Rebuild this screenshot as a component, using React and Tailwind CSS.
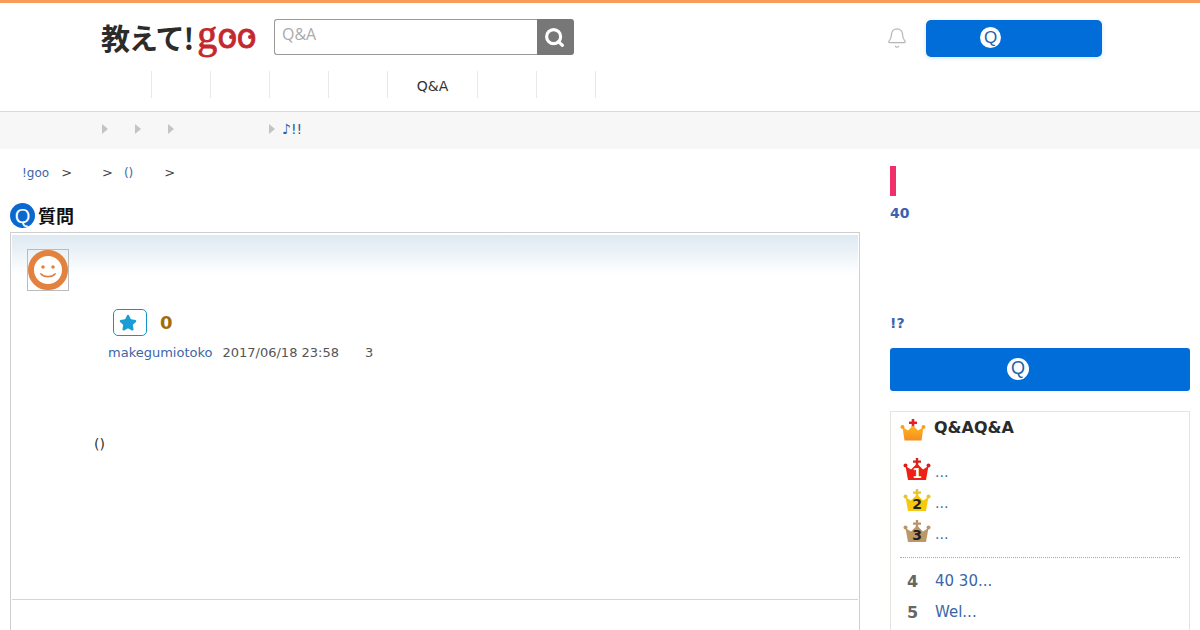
import { Search, Bell, Star } from "lucide-react";

const navWidths = ["w-[59px]", "w-[59px]", "w-[59px]", "w-[59px]", "w-[59px]", "w-[90px]", "w-[59px]", "w-[59px]"];

const Crown = ({ fill, dark, label, labelColor }) => (
  <svg viewBox="0 0 28 24" className="w-[28px] h-[24px] shrink-0">
    <path d="M12.8 1h2.4v2.6H18v2.2h-2.8V9h-2.4V5.8H10V3.6h2.8z" fill={dark} />
    <path d="M2.5 9l5.5 3.5 6-6 6 6L25.5 9 23 23H5z" fill={fill} />
    <circle cx="2.5" cy="8.5" r="2" fill={dark} />
    <circle cx="25.5" cy="8.5" r="2" fill={dark} />
    <text x="14" y="21" textAnchor="middle" fontSize="14" fontWeight="700" fontFamily="DejaVu Sans, sans-serif" fill={labelColor}>
      {label}
    </text>
  </svg>
);

const Triangle = () => <span className="block w-0 h-0 border-y-[5px] border-y-transparent border-l-[6px] border-l-[#c4c4c4]" />;

const Header = () => (
  <header className="border-t-[3px] border-[#f79c5a]">
    <div className="h-[109px] border-b border-[#d9d9d9]">
      {/* Logo + search */}
      <div className="flex items-start pl-[101px] pt-[16px] h-[68px]">
        <div className="relative flex items-center w-[173px] h-[36px] leading-none">
          <span className="font-['Noto_Sans_CJK_JP'] font-bold text-[29px] text-[#2b2b2b] tracking-[-1px]">教えて!</span>
          <span className="ml-[4px] mb-[5px] flex items-baseline text-[#c4282c]">
            <span className="font-['Liberation_Serif'] text-[40px] [-webkit-text-stroke:0.8px_#c4282c]">g</span>
            <span className="font-['DejaVu_Sans'] text-[33px] tracking-[-1px] [-webkit-text-stroke:0.8px_#c4282c]">oo</span>
          </span>
          <span className="absolute left-[128px] top-[16px] w-[4px] h-[4px] rounded-full bg-[#c4282c]" />
          <span className="absolute left-[147px] top-[16px] w-[4px] h-[4px] rounded-full bg-[#c4282c]" />
        </div>
        <div className="flex w-[300px] h-[36px]">
          <div className="flex-1 border border-[#999] border-r-0 rounded-l-[3px] pl-[7px] pt-[4px] text-[16px] leading-[20px] text-[#aaa] font-['Open_Sans']">Q&amp;A</div>
          <div className="w-[37px] bg-[#777] rounded-r-[3px] flex items-center justify-center pr-[2px]">
            <Search className="w-[21px] h-[21px] text-white" strokeWidth={3.6} />
          </div>
        </div>
        <div className="ml-auto mr-[98px] flex items-start">
          <Bell className="w-[22px] h-[22px] text-[#b5b5b5] mt-[8px] mr-[18px]" strokeWidth={1.3} />
          <div className="w-[176px] h-[37px] mt-[1px] bg-[#006dd9] rounded-[5px] shadow-[0_1px_4px_rgba(0,109,217,0.2)] flex items-center pl-[54px] pb-[2px]">
            <span className="w-[21px] h-[21px] rounded-full bg-white text-[#1f62ad] flex items-center justify-center text-[17px] font-['Liberation_Sans']">Q</span>
          </div>
        </div>
      </div>
      {/* Nav */}
      <nav className="flex pl-[93px]">
        {navWidths.map((w, i) => (
          <div key={i} className={`${w} h-[27px] pt-[4px] border-r border-[#e8e8e8] flex items-center justify-center text-[14px] text-[#333] font-['DejaVu_Sans']`}>
            {i === 5 ? "Q&A" : ""}
          </div>
        ))}
      </nav>
    </div>
    <div className="h-[37px] pb-[3px] bg-[#f7f7f7] flex items-center pl-[102px] font-['DejaVu_Sans'] text-[14px] text-[#2f5d9e]">
      <Triangle />
      <span className="ml-[27px]"><Triangle /></span>
      <span className="ml-[27px]"><Triangle /></span>
      <span className="ml-[95px]"><Triangle /></span>
      <span className="ml-[7px]">♪!!</span>
    </div>
  </header>
);

const Question = () => (
  <main className="w-[860px] pl-[10px]">
    {/* Breadcrumb */}
    <div className="h-[47px] pt-[15px] pl-[13px] flex items-start text-[12px] leading-[18px] text-[#3a66a8]">
      <span className="ml-[-1px]">!goo</span>
      <span className="ml-[12px] text-[#444] text-[13px]">&gt;</span>
      <span className="ml-[30px] text-[#444] text-[13px]">&gt;</span>
      <span className="ml-[11px]">()</span>
      <span className="ml-[31px] text-[#444] text-[13px]">&gt;</span>
    </div>
    {/* Heading */}
    <div className="flex items-center h-[25px] mt-[7px]">
      <span className="w-[25px] h-[25px] rounded-full bg-[#0a68cf] text-white flex items-center justify-center text-[20px] font-['Liberation_Sans']">Q</span>
      <span className="ml-[3px] mb-[2px] font-['Noto_Sans_CJK_JP'] font-bold text-[18px] leading-none text-[#111]">質問</span>
    </div>
    {/* Card */}
    <div className="mt-[4px] h-[420px] border border-[#cfcfcf] px-[1px] pt-[2px]">
      <div className="h-[365px] border-b border-[#d5d5d5] bg-gradient-to-b from-[#dde9f1] from-0% to-white to-[11%] pl-[15px] pt-[14px]">
        <div className="w-[42px] h-[42px] border border-[#bbb] flex items-center justify-center">
          <svg viewBox="0 0 40 40" className="w-[40px] h-[40px]">
            <circle cx="20" cy="20" r="17" fill="#fff" stroke="#e3813e" strokeWidth="6" />
            <circle cx="15" cy="17" r="1.8" fill="#e3813e" />
            <circle cx="25" cy="17" r="1.8" fill="#e3813e" />
            <path d="M13 24c3 3.4 11 3.4 14 0" fill="none" stroke="#e3813e" strokeWidth="1.8" strokeLinecap="round" />
          </svg>
        </div>
        <div className="flex items-center mt-[18px] ml-[86px]">
          <span className="w-[34px] h-[27px] border border-[#1594c9] rounded-[5px] flex items-center justify-center pr-[4px]">
            <Star className="w-[18px] h-[18px] text-[#1a9cd4] fill-[#1a9cd4]" />
          </span>
          <span className="ml-[13px] text-[18px] font-bold text-[#a36c08] font-['DejaVu_Sans']">0</span>
        </div>
        <div className="flex mt-[8px] ml-[81px] text-[13px] leading-[18px] font-['DejaVu_Sans']">
          <span className="text-[#3a66a8]">makegumiotoko</span>
          <span className="ml-[10px] text-[#555]">2017/06/18 23:58</span>
          <span className="ml-[26px] text-[#555]">3</span>
        </div>
        <p className="mt-[72px] ml-[67px] text-[14px] leading-[20px] text-[#333] font-['DejaVu_Sans']">()</p>
      </div>
    </div>
  </main>
);

const topRanks = [
  { fill: "#ee2016", dark: "#d8201c", label: "1", labelColor: "#fff" },
  { fill: "#f6c80e", dark: "#ecc22c", label: "2", labelColor: "#222" },
  { fill: "#bd9766", dark: "#b8956c", label: "3", labelColor: "#222" },
];

const Sidebar = () => (
  <aside className="w-[300px] ml-[30px] pt-[17px] font-['DejaVu_Sans']">
    <div className="w-[6px] h-[30px] bg-[#f0306a]" />
    <p className="mt-[9px] text-[14px] leading-[16px] font-bold text-[#3a62b0]">40</p>
    <p className="mt-[94px] text-[14px] leading-[16px] font-bold text-[#3a62b0]">!?</p>
    <div className="mt-[17px] h-[43px] pb-[2px] bg-[#006dd9] rounded-[3px] flex items-center pl-[117px]">
      <span className="w-[22px] h-[22px] rounded-full bg-white text-[#1f62ad] flex items-center justify-center text-[18px] font-['Liberation_Sans']">Q</span>
    </div>
    <div className="mt-[20px] border border-[#e6e4de] h-[300px] px-[9px]">
      <div className="flex items-start h-[32px] pt-[7px]">
        <svg viewBox="0 0 26 22" className="w-[26px] h-[22px]">
          <defs>
            <linearGradient id="gold" x1="0" y1="0" x2="0" y2="1">
              <stop offset="0" stopColor="#fdb81e" />
              <stop offset="1" stopColor="#f78c1e" />
            </linearGradient>
          </defs>
          <path d="M11.7 0h2.6v2.6H17v2.3h-2.700V8h-2.600V4.900H9V2.600h2.700z" fill="#e3202a" />
          <path d="M2.500 8l5.500 3.500 5-5 5 5L23.500 8l-2 13.500h-17z" fill="url(#gold)" />
          <circle cx="2.500" cy="8" r="2" fill="#f4a21e" />
          <circle cx="23.500" cy="8" r="2" fill="#f4a21e" />
        </svg>
        <span className="ml-[8px] text-[16px] leading-[18px] font-bold text-[#2b2b2b]">Q&amp;AQ&amp;A</span>
      </div>
      <div className="h-[114px] border-b border-dotted border-[#aaa] pl-[3px] pt-[6px]">
        {topRanks.map((r) => (
          <div key={r.label} className="flex items-end h-[31px]">
            <Crown {...r} />
            <span className="ml-[4px] text-[14px] leading-[18px] text-[#3a66a8]">...</span>
          </div>
        ))}
      </div>
      <div className="pt-[8px] text-[15px]">
        <div className="flex items-center h-[31px]">
          <span className="w-[25px] pl-[7px] text-[16px] font-bold text-[#666]">4</span>
          <span className="ml-[10px] text-[#3a66a8]">40 30...</span>
        </div>
        <div className="flex items-center h-[31px]">
          <span className="w-[25px] pl-[7px] text-[16px] font-bold text-[#666]">5</span>
          <span className="ml-[10px] text-[#3a66a8]">Wel...</span>
        </div>
      </div>
    </div>
  </aside>
);

export default function App() {
  return (
    <div className="w-[1200px] h-[630px] overflow-hidden bg-white font-['DejaVu_Sans']">
      <Header />
      <div className="flex">
        <Question />
        <Sidebar />
      </div>
    </div>
  );
}
